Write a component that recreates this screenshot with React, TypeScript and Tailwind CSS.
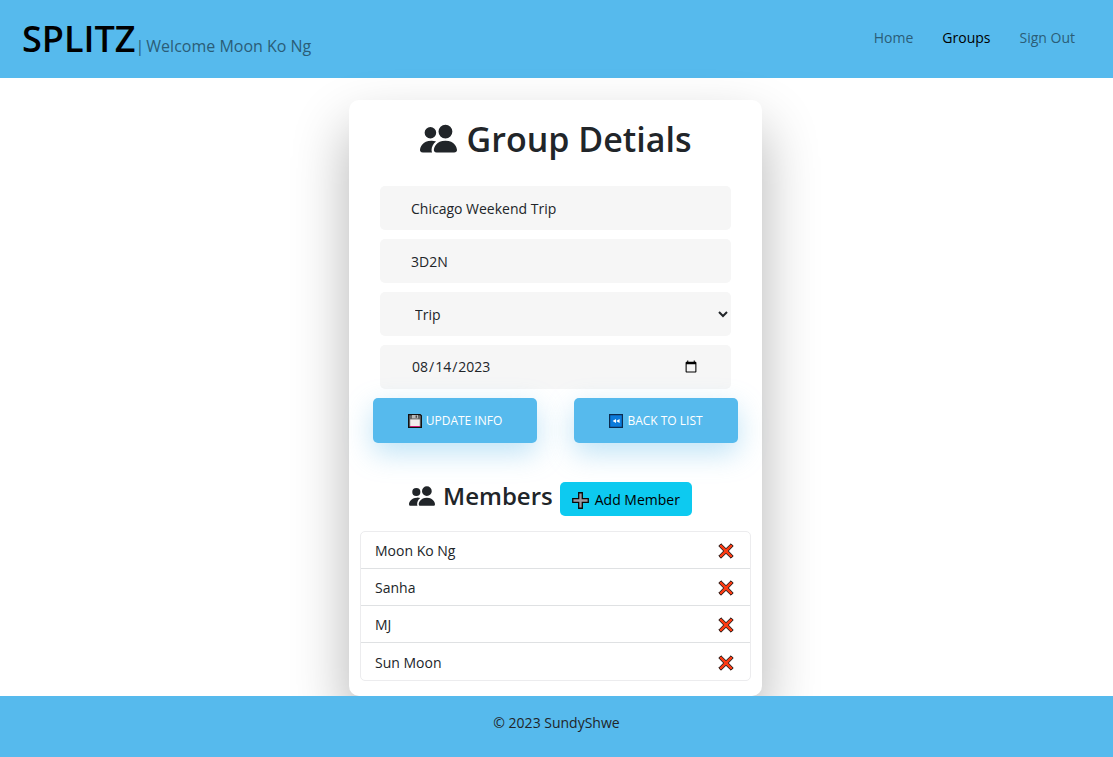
import { useState } from 'react';
import { BsPeopleFill } from 'react-icons/bs';

const navItems = [
  { label: 'Home', active: false },
  { label: 'Groups', active: true },
  { label: 'Sign Out', active: false },
];

const initialMembers = ['Moon Ko Ng', 'Sanha', 'MJ', 'Sun Moon'];

const fieldClass =
  'block h-11 w-full rounded-[5px] border-0 bg-[#f6f6f6] px-[31px] text-sm text-[#212529] outline-none';

const actionClass =
  'flex h-[45px] flex-1 items-center justify-center gap-1 rounded-[5px] bg-[#56baed] text-xs text-white uppercase shadow-[0_10px_28px_0_rgba(95,186,233,0.4)]';

function FloppyIcon() {
  return (
    <svg className="size-3.5" viewBox="0 0 14 14" aria-hidden="true">
      <path d="M.6.6h11.6l1.2 1.2v11.6H.6z" fill="#666" stroke="#111" strokeWidth="1.2" />
      <path d="M4 1h6v3.4H4z" fill="#b8b8b8" />
      <path d="M7.6 1.4h1.4v2.3H7.6z" fill="#444" />
      <path d="M2.2 5.4h9.6v6.6H2.2z" fill="#f1ecec" />
      <path d="M2.2 12h9.6v.9H2.2z" fill="#e3177b" />
    </svg>
  );
}

function RewindIcon() {
  return (
    <svg className="size-3.5" viewBox="0 0 14 14" aria-hidden="true">
      <path d="M.6.6h12.8v12.8H.6z" fill="#0b7bdc" stroke="#0b2c50" strokeWidth="1.2" />
      <path d="M7 4.9v4.2L3.6 7zM10.6 4.9v4.2L7.2 7z" fill="#fff" />
    </svg>
  );
}

function PlusIcon() {
  return (
    <svg className="size-[17px]" viewBox="0 0 16 16" aria-hidden="true">
      <path
        d="M6.3.7h3.4v5.6h5.6v3.4H9.7v5.6H6.3V9.7H.7V6.3h5.6z"
        fill="#9b9ba3"
        stroke="#080808"
        strokeWidth="1.2"
      />
    </svg>
  );
}

function CrossIcon() {
  return (
    <svg className="block size-4" viewBox="0 0 16 16" aria-hidden="true">
      <path
        d="M3 .8 8 5.7 13 .8 15.2 3 10.3 8l4.9 5-2.2 2.2-5-4.9-5 4.9L.8 13l4.9-5L.8 3z"
        fill="#fb3a12"
        stroke="#1c1614"
        strokeWidth="1"
        strokeLinejoin="round"
      />
    </svg>
  );
}

export default function App() {
  const [members, setMembers] = useState(initialMembers);

  return (
    <div className="flex min-h-screen flex-col bg-white font-['Open_Sans','Noto_Sans',sans-serif] text-sm text-[#212529]">
      <header className="flex h-[78px] items-center justify-between bg-[#56baed] pr-[38px] pl-[22px]">
        <div className="flex items-baseline">
          <a href="#home" className="text-4xl font-semibold text-black">
            SPLITZ
          </a>
          <span className="flex gap-0.5 text-base text-[#2b5d77]">
            <span>|</span>
            <span>Welcome Moon Ko Ng</span>
          </span>
        </div>
        <nav className="flex gap-[29px] pb-0.5">
          {navItems.map((item) => (
            <a
              key={item.label}
              href="#nav"
              className={item.active ? 'text-black' : 'text-[#2b5d77]'}
            >
              {item.label}
            </a>
          ))}
        </nav>
      </header>

      <main className="flex flex-1 justify-center pt-[22px] pr-[18px] pl-4">
        <section className="flex w-full max-w-[413px] flex-col items-center rounded-[10px] bg-white px-[11px] pb-[15px] shadow-[0_28px_56px_0_rgba(0,0,0,0.3)]">
          <h1 className="flex h-[86px] items-center gap-2.5 pb-2 text-[34px] font-semibold">
            <BsPeopleFill className="mb-0.5 size-[37px]" />
            Group Detials
          </h1>

          <form className="w-full" onSubmit={(e) => e.preventDefault()}>
            <div className="flex flex-col gap-[9px] px-5">
              <input aria-label="Group name" className={fieldClass} defaultValue="Chicago Weekend Trip" />
              <input aria-label="Description" className={fieldClass} defaultValue="3D2N" />
              <select aria-label="Category" className={fieldClass} defaultValue="Trip">
                <option>Trip</option>
                <option>Home</option>
                <option>Other</option>
              </select>
              <input aria-label="Date" type="date" className={fieldClass} defaultValue="2023-08-14" />
            </div>
            <div className="mt-[9px] flex gap-[37px] px-[13px]">
              <button type="submit" className={actionClass}>
                <FloppyIcon />
                Update Info
              </button>
              <button type="button" className={actionClass}>
                <RewindIcon />
                Back to List
              </button>
            </div>
          </form>

          <div className="mt-[39px] flex items-start gap-[7px] pr-2.5">
            <h2 className="flex items-center gap-2 text-2xl leading-7 font-semibold">
              <BsPeopleFill className="size-[26px]" />
              Members
            </h2>
            <button
              type="button"
              className="flex h-[34px] items-center gap-1.5 rounded-[5px] bg-[#0dcaf0] px-3 pt-0.5 text-black"
            >
              <PlusIcon />
              Add Member
            </button>
          </div>

          <ul className="mt-[15px] w-full divide-y divide-[#dfe1e3] rounded-[5px] border border-[#ececee]">
            {members.map((name) => (
              <li key={name} className="flex h-[37px] items-center justify-between pt-0.5 pr-4 pl-3.5">
                {name}
                <button
                  type="button"
                  aria-label={`Remove ${name}`}
                  onClick={() => setMembers(members.filter((m) => m !== name))}
                >
                  <CrossIcon />
                </button>
              </li>
            ))}
          </ul>
        </section>
      </main>

      <footer className="relative h-[61px] bg-[#56baed] pt-[17px] text-center text-[#212529]">
        © 2023 SundyShwe
      </footer>
    </div>
  );
}
